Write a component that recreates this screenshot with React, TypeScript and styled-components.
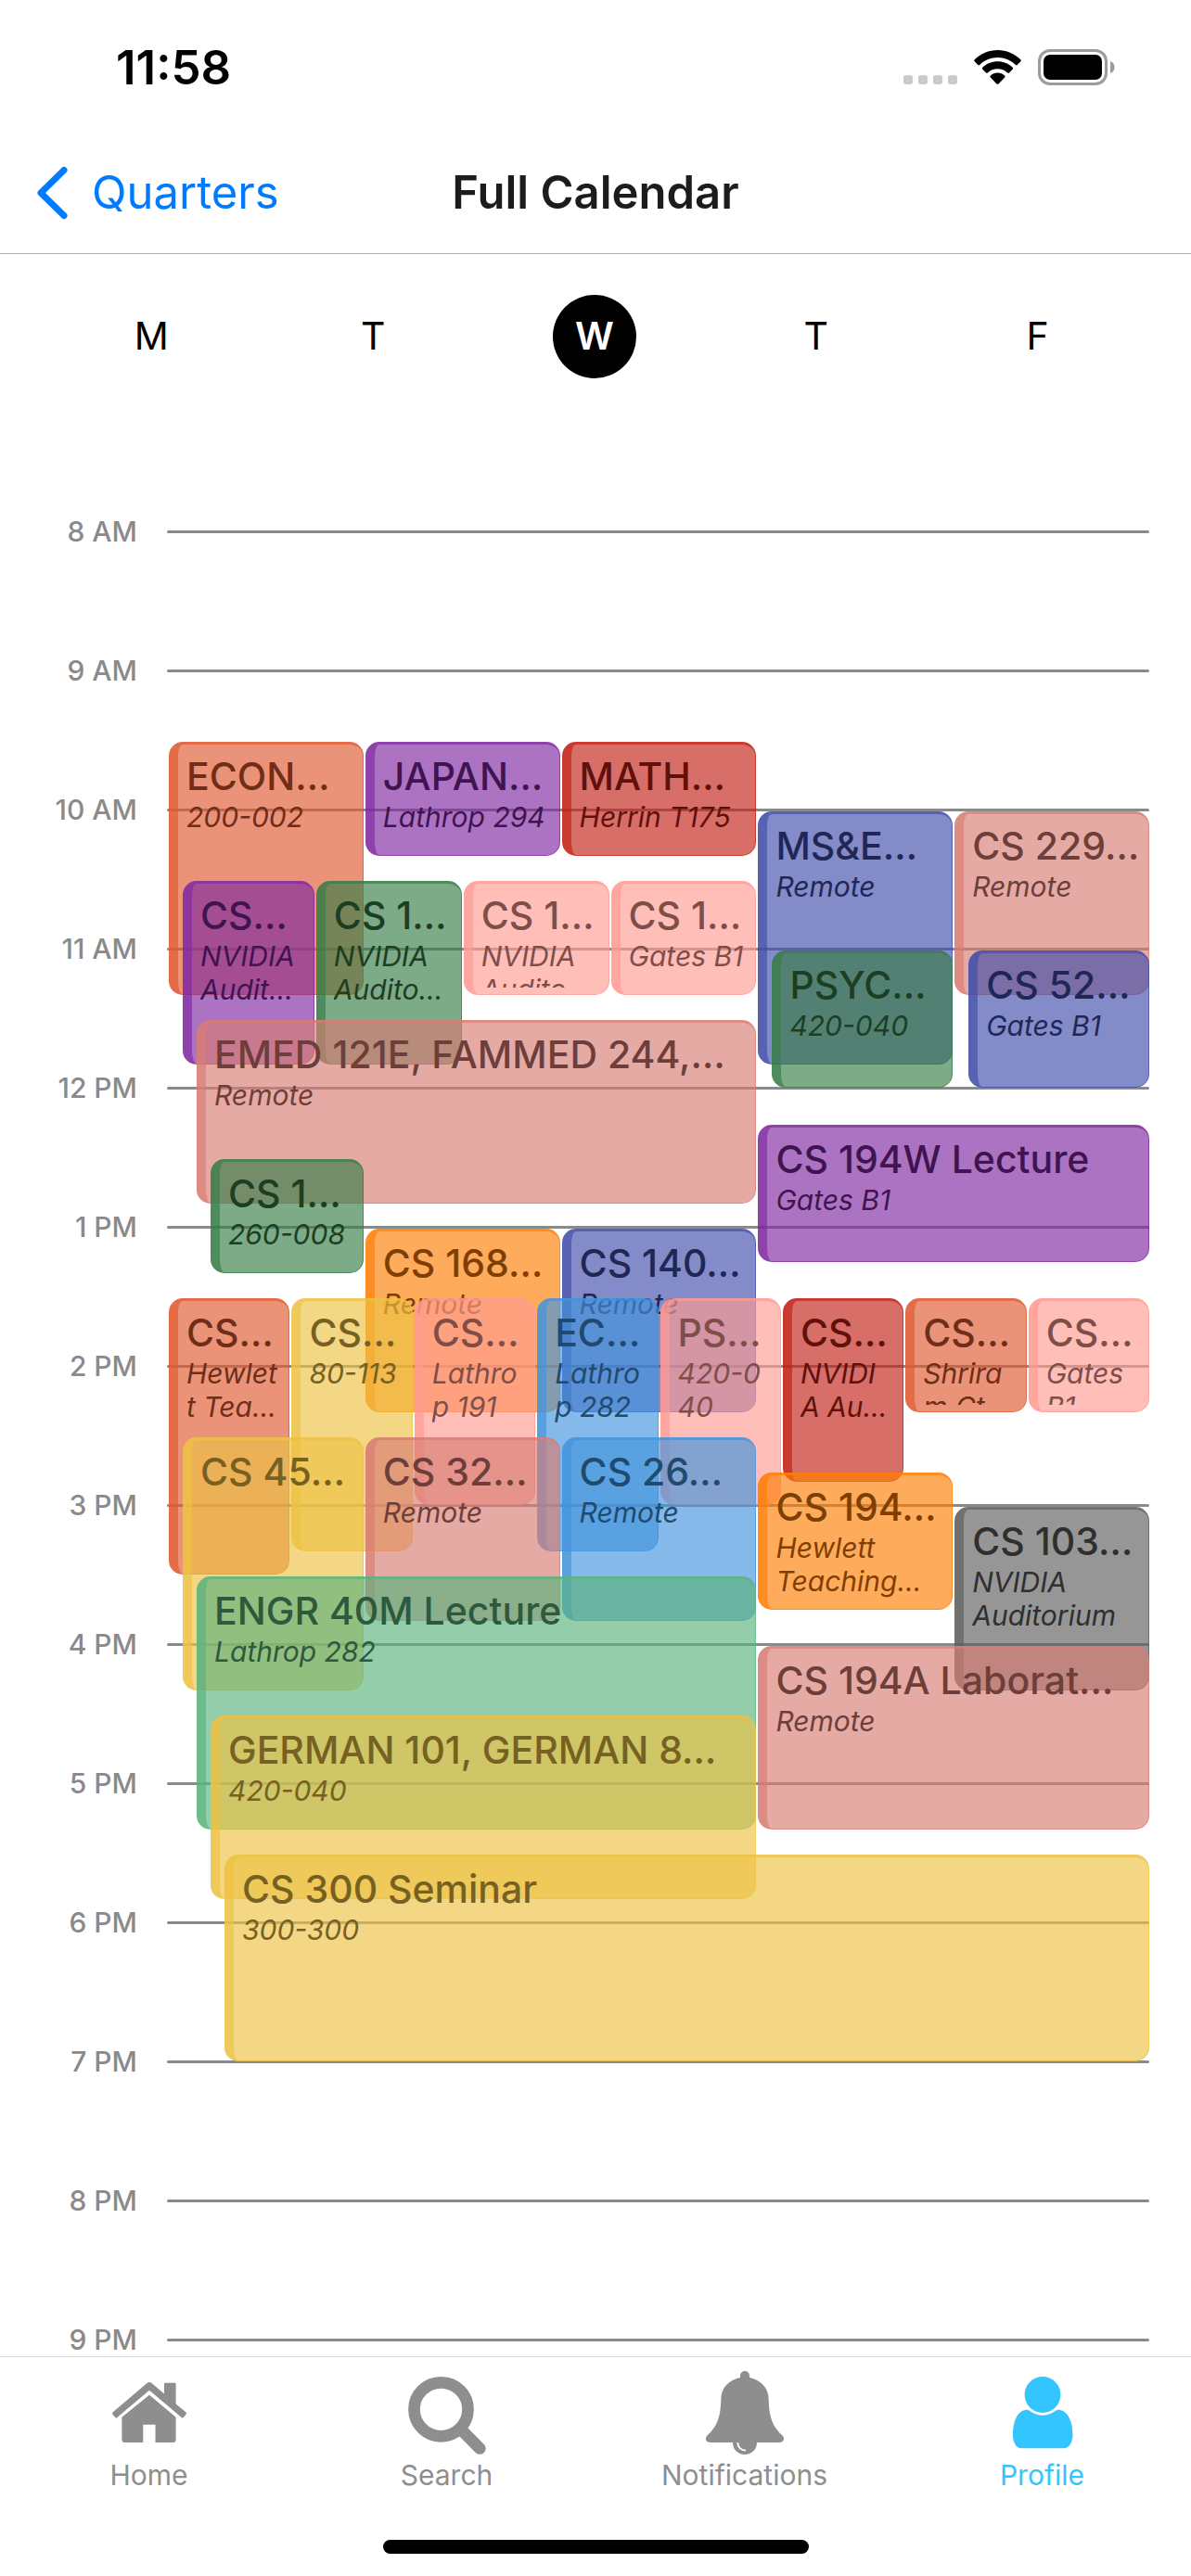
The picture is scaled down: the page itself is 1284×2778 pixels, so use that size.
import React from 'react';
import styled, { createGlobalStyle } from 'styled-components';

const GlobalStyle = createGlobalStyle`
  *, *::before, *::after { box-sizing: border-box; }
  body {
    margin: 0;
    background: #fff;
    color: #000;
    font-family: Inter, "Liberation Sans", sans-serif;
    -webkit-font-smoothing: antialiased;
  }
  button { font: inherit; color: inherit; border: 0; background: none; padding: 0; cursor: pointer; }
  h1, h2, p, ol { margin: 0; padding: 0; }
`;

const Screen = styled.div`
  display: flex;
  flex-direction: column;
  height: 100vh;
  overflow: hidden;
  background: #fff;
`;

/* ---------- status bar ---------- */

const StatusBar = styled.div`
  flex: none;
  display: flex;
  align-items: center;
  justify-content: space-between;
  height: 145px;
  padding: 0 82px 0 125px;
`;

const Clock = styled.time`
  font-size: 51px;
  line-height: 60px;
  font-weight: 600;
`;

const StatusIcons = styled.div`
  display: flex;
  align-items: center;
  gap: 18px;
`;

const Signal = styled.div`
  display: flex;
  align-self: flex-end;
  gap: 6px;
  padding-bottom: 1px;
`;

const SignalDot = styled.span`
  width: 10px;
  height: 10px;
  border-radius: 3px;
  background: #cacaca;
`;

/* ---------- navigation header ---------- */

const NavBar = styled.header`
  flex: none;
  display: grid;
  grid-template-columns: 1fr auto 1fr;
  align-items: center;
  height: 129px;
  padding: 0 40px 2px;
  border-bottom: 1px solid #b2b2b2;
`;

const BackLink = styled.a`
  display: flex;
  align-items: center;
  gap: 24px;
  color: #007aff;
  font-size: 49px;
  line-height: 60px;
  text-decoration: none;
`;

const NavTitle = styled.h1`
  font-size: 49px;
  line-height: 60px;
  font-weight: 600;
  color: #1c1c1e;
`;

/* ---------- weekday picker ---------- */

const WeekBar = styled.nav`
  flex: none;
  display: grid;
  grid-template-columns: repeat(5, 1fr);
  justify-items: center;
  padding: 44px 46px 90px 44px;
`;

const DayButton = styled.button<{ $active?: boolean }>`
  width: 90px;
  height: 90px;
  padding-bottom: 2px;
  border-radius: 50%;
  font-size: 41px;
  line-height: 88px;
  font-weight: ${(p) => (p.$active ? 600 : 400)};
  color: ${(p) => (p.$active ? '#fff' : '#000')};
  background: ${(p) => (p.$active ? '#000' : 'transparent')};
`;

/* ---------- schedule ---------- */

const Schedule = styled.main`
  flex: 1;
  min-height: 0;
  display: grid;
  grid-template-columns: minmax(0, 1fr);
  align-content: start;
  overflow-y: auto;
  scrollbar-width: none;
`;

const Hours = styled.ol`
  grid-area: 1 / 1;
  list-style: none;
`;

const HourRow = styled.li`
  display: grid;
  grid-template-columns: 148px 1fr;
  column-gap: 32px;
  align-items: center;
  height: 150px;
  padding: 1px 45px 0 0;
  font-size: 30px;
  line-height: 35px;
  font-weight: 500;
  text-align: right;
  color: #8a8a8a;
`;

const HourLine = styled.span`
  height: 3px;
  border-radius: 2px;
  background: #8a8a8a;
`;

/* 40 lanes divide evenly into 4, 5 and 8 columns; one row is five minutes. */
const Events = styled.div`
  grid-area: 1 / 1;
  display: grid;
  grid-template-columns: repeat(40, minmax(0, 1fr));
  grid-template-rows: repeat(156, minmax(0, 1fr));
  margin: 75px 45px 75px 180px;
`;

type Tint = [number, number, number];

/* Size containment keeps the text from stretching the five-minute rows. */
const EventCard = styled.article<{
  $tint: Tint;
  $lane: number;
  $span: number;
  $start: number;
  $end: number;
  $depth: number;
}>`
  grid-column: ${(p) => p.$lane + 1} / span ${(p) => p.$span};
  grid-row: ${(p) => p.$start} / ${(p) => p.$end};
  contain: size;
  display: flex;
  flex-direction: column;
  min-width: 0;
  min-height: 0;
  margin: 2px 0 0 ${(p) => 2 + p.$depth * 15}px;
  padding: 8px 0 7px 9px;
  border: solid rgba(${(p) => p.$tint.join(',')}, 0.65);
  border-width: 3px 1px 1px 10px;
  border-radius: 15px;
  background: rgba(${(p) => p.$tint.join(',')}, 0.65);
  color: rgb(${(p) => p.$tint.map((c) => Math.round(c / 2)).join(',')});
`;

const EventBody = styled.div`
  flex: 1;
  min-height: 0;
  overflow: hidden;
  white-space: nowrap;
`;

const EventTitle = styled.h2`
  font-size: 41px;
  line-height: 52px;
  font-weight: 500;
`;

const EventPlace = styled.p`
  font-size: 30px;
  line-height: 36px;
  font-style: italic;
  white-space: pre-line;
`;

/* ---------- tab bar ---------- */

const TabBar = styled.footer`
  flex: none;
  padding: 15px 0 24px;
  border-top: 1px solid #d8d8d8;
  background: #fff;
`;

const Tabs = styled.nav`
  display: grid;
  grid-template-columns: repeat(4, 1fr);
`;

const Tab = styled.a<{ $active?: boolean }>`
  display: flex;
  flex-direction: column;
  align-items: center;
  gap: 4px;
  font-size: 30px;
  line-height: 36px;
  text-decoration: none;
  color: ${(p) => (p.$active ? '#34c5ff' : '#8e8e8e')};
`;

const HomeIndicator = styled.div`
  width: 459px;
  height: 15px;
  margin: 52px auto 0;
  border-radius: 8px;
  background: #000;
`;

const TINTS: Record<string, Tint> = {
  coral: [224, 89, 47],
  purple: [127, 40, 161],
  red: [193, 33, 21],
  forest: [55, 124, 70],
  pink: [255, 155, 146],
  salmon: [217, 124, 115],
  indigo: [64, 77, 170],
  orange: [255, 126, 4],
  yellow: [236, 193, 67],
  blue: [66, 147, 221],
  gray: [93, 93, 93],
  mint: [90, 178, 124],
};

interface CourseEvent {
  title: string;
  place: string;
  tint: string;
  start: string;
  end: string;
  lane: number;
  span: number;
  depth?: number;
}

const EVENTS: CourseEvent[] = [
  { title: 'ECON…', place: '200-002', tint: 'coral', start: '9:30', end: '11:20', lane: 0, span: 8 },
  { title: 'JAPAN…', place: 'Lathrop 294', tint: 'purple', start: '9:30', end: '10:20', lane: 8, span: 8 },
  { title: 'MATH…', place: 'Herrin T175', tint: 'red', start: '9:30', end: '10:20', lane: 16, span: 8 },
  { title: 'MS&E…', place: 'Remote', tint: 'indigo', start: '10:00', end: '11:50', lane: 24, span: 8 },
  { title: 'CS 229…', place: 'Remote', tint: 'salmon', start: '10:00', end: '11:20', lane: 32, span: 8 },
  { title: 'CS…', place: 'NVIDIA\nAudit…', tint: 'purple', start: '10:30', end: '11:50', lane: 0, span: 6, depth: 1 },
  { title: 'CS 1…', place: 'NVIDIA\nAudito…', tint: 'forest', start: '10:30', end: '11:50', lane: 6, span: 6 },
  { title: 'CS 1…', place: 'NVIDIA\nAudito…', tint: 'pink', start: '10:30', end: '11:20', lane: 12, span: 6 },
  { title: 'CS 1…', place: 'Gates B1', tint: 'pink', start: '10:30', end: '11:20', lane: 18, span: 6 },
  { title: 'PSYC…', place: '420-040', tint: 'forest', start: '11:00', end: '12:00', lane: 24, span: 8, depth: 1 },
  { title: 'CS 52…', place: 'Gates B1', tint: 'indigo', start: '11:00', end: '12:00', lane: 32, span: 8, depth: 1 },
  { title: 'EMED 121E, FAMMED 244,…', place: 'Remote', tint: 'salmon', start: '11:30', end: '12:50', lane: 0, span: 24, depth: 2 },
  { title: 'CS 194W Lecture', place: 'Gates B1', tint: 'purple', start: '12:15', end: '13:15', lane: 24, span: 16 },
  { title: 'CS 1…', place: '260-008', tint: 'forest', start: '12:30', end: '13:20', lane: 0, span: 8, depth: 3 },
  { title: 'CS 168…', place: 'Remote', tint: 'orange', start: '13:00', end: '14:20', lane: 8, span: 8 },
  { title: 'CS 140…', place: 'Remote', tint: 'indigo', start: '13:00', end: '14:20', lane: 16, span: 8 },
  { title: 'CS…', place: 'Hewlet\nt Tea…', tint: 'coral', start: '13:30', end: '15:30', lane: 0, span: 5 },
  { title: 'CS…', place: '80-113', tint: 'yellow', start: '13:30', end: '15:20', lane: 5, span: 5 },
  { title: 'CS…', place: 'Lathro\np 191', tint: 'pink', start: '13:30', end: '15:00', lane: 10, span: 5 },
  { title: 'EC…', place: 'Lathro\np 282', tint: 'blue', start: '13:30', end: '15:20', lane: 15, span: 5 },
  { title: 'PS…', place: '420-0\n40', tint: 'pink', start: '13:30', end: '15:00', lane: 20, span: 5 },
  { title: 'CS…', place: 'NVIDI\nA Au…', tint: 'red', start: '13:30', end: '14:50', lane: 25, span: 5 },
  { title: 'CS…', place: 'Shrira\nm Ct…', tint: 'coral', start: '13:30', end: '14:20', lane: 30, span: 5 },
  { title: 'CS…', place: 'Gates\nB1', tint: 'pink', start: '13:30', end: '14:20', lane: 35, span: 5 },
  { title: 'CS 45…', place: '', tint: 'yellow', start: '14:30', end: '16:20', lane: 0, span: 8, depth: 1 },
  { title: 'CS 32…', place: 'Remote', tint: 'salmon', start: '14:30', end: '15:50', lane: 8, span: 8 },
  { title: 'CS 26…', place: 'Remote', tint: 'blue', start: '14:30', end: '15:50', lane: 16, span: 8 },
  { title: 'CS 194…', place: 'Hewlett\nTeaching…', tint: 'orange', start: '14:45', end: '15:45', lane: 24, span: 8 },
  { title: 'CS 103…', place: 'NVIDIA\nAuditorium', tint: 'gray', start: '15:00', end: '16:20', lane: 32, span: 8 },
  { title: 'ENGR 40M Lecture', place: 'Lathrop 282', tint: 'mint', start: '15:30', end: '17:20', lane: 0, span: 24, depth: 2 },
  { title: 'CS 194A Laborat…', place: 'Remote', tint: 'salmon', start: '16:00', end: '17:20', lane: 24, span: 16 },
  { title: 'GERMAN 101, GERMAN 8…', place: '420-040', tint: 'yellow', start: '16:30', end: '17:50', lane: 0, span: 24, depth: 3 },
  { title: 'CS 300 Seminar', place: '300-300', tint: 'yellow', start: '17:30', end: '19:00', lane: 0, span: 40, depth: 4 },
];

const HOURS = [
  '8 AM', '9 AM', '10 AM', '11 AM', '12 PM', '1 PM', '2 PM',
  '3 PM', '4 PM', '5 PM', '6 PM', '7 PM', '8 PM', '9 PM',
];

const toRow = (time: string) => {
  const [h, m] = time.split(':').map(Number);
  return (h - 8) * 12 + m / 5 + 1;
};

const WifiIcon = () => (
  <svg width="51" height="37" viewBox="0 0 51 37" fill="#000" aria-hidden="true">
    <path d="M25.5 0C35 0 43.800 3.800 50.300 10.200c.6.600.6 1.400 0 2l-3.600 3.700c-.5.500-1.300.500-1.900 0C39.700 10.900 32.900 8 25.500 8S11.300 10.900 6.200 15.900c-.6.500-1.400.5-1.900 0L.7 12.200c-.6-.6-.6-1.400 0-2C7.200 3.800 16 0 25.500 0z" />
    <path d="M25.500 12.300c6.200 0 11.900 2.400 16.200 6.400.6.600.6 1.400 0 2L38 24.400c-.5.500-1.300.5-1.900 0-2.900-2.600-6.600-4.100-10.600-4.100s-7.700 1.500-10.600 4.100c-.6.500-1.400.5-1.900 0l-3.700-3.700c-.6-.6-.6-1.400 0-2 4.300-4 10-6.400 16.200-6.400z" />
    <path d="M25.500 24.600c2.900 0 5.600 1.100 7.600 2.800.6.600.6 1.400.1 2l-6.700 7c-.6.600-1.400.6-2 0l-6.700-7c-.5-.6-.5-1.400.1-2 2-1.700 4.700-2.800 7.600-2.800z" />
  </svg>
);

const BatteryIcon = () => (
  <svg width="83" height="39" viewBox="0 0 83 39" aria-hidden="true">
    <rect x="1.500" y="1.500" width="72" height="36" rx="11.500" fill="none" stroke="#9c9c9c" strokeWidth="3" />
    <rect x="6" y="6" width="63" height="27" rx="7" fill="#000" />
    <path d="M78 13c3 1 4.500 3.500 4.500 6.500S81 25 78 26z" fill="#9c9c9c" />
  </svg>
);

const ChevronLeft = () => (
  <svg width="35" height="58" viewBox="0 0 35 58" fill="none" stroke="#007aff" strokeWidth="7" strokeLinecap="round" strokeLinejoin="round" aria-hidden="true">
    <path d="M29 4.500 4 29l25 24.500" />
  </svg>
);

const HomeIcon = () => (
  <svg width="90" height="90" viewBox="0 0 90 90" fill="currentColor" aria-hidden="true">
    <path d="M42.500 13Q45 11 47.500 13L61 24.500V14Q61 12.700 62.300 12.700H72.300Q73.600 12.700 73.600 14V35.500L84.500 44.500Q85.500 45.500 84.700 46.600L81.700 50Q80.700 51 79.700 50L45 20.700 10.300 50Q9.300 51 8.300 50L5.300 46.600Q4.500 45.500 5.500 44.500Z" />
    <path d="M45 25.700 73.600 49.700V74Q73.600 77 70.600 77H51.500V57.700H38.300V77H18.400Q15.400 77 15.400 74V49.700Z" />
  </svg>
);

const SearchIcon = () => (
  <svg width="90" height="90" viewBox="0 0 90 90" fill="none" stroke="currentColor" strokeWidth="12.700" strokeLinecap="round" aria-hidden="true">
    <circle cx="38.500" cy="41.300" r="29" />
    <path d="M60 63 80.300 83.500" />
  </svg>
);

const BellIcon = () => (
  <svg width="90" height="90" viewBox="0 0 90 90" fill="currentColor" aria-hidden="true">
    <path d="M45 0c3 0 5 2.200 5 5.500V7C62 9.500 70.500 18 70.700 30 71 50 75 60 86 70c2.500 3.500.5 7-4 7H58c0 7.500-5.500 13-13 13s-13-5.500-13-13H8c-4.500 0-6.500-3.500-4-7C15 60 19 50 19.300 30 19.500 18 28 9.500 40 7V5.500C40 2.200 42 0 45 0z" />
    <path d="M37.300 77c0 5 3.500 8.700 8.700 8.700" fill="none" stroke="#fff" strokeWidth="1.800" />
  </svg>
);

const ProfileIcon = () => (
  <svg width="90" height="90" viewBox="0 0 90 90" fill="currentColor" aria-hidden="true">
    <circle cx="45" cy="25.500" r="19.400" />
    <path d="M28 41.700C31 41.200 35 47.700 45 47.700S59 41.200 62 41.700C72.500 42 77.500 55 77.500 69c0 8-4 14.300-10 14.300h-45C16.500 83.300 13 77 13 69 13 55 17.500 42 28 41.700z" />
  </svg>
);

const TABS = [
  { label: 'Home', Icon: HomeIcon },
  { label: 'Search', Icon: SearchIcon },
  { label: 'Notifications', Icon: BellIcon },
  { label: 'Profile', Icon: ProfileIcon, active: true },
];

const DAYS = [
  { letter: 'M', name: 'Monday' },
  { letter: 'T', name: 'Tuesday' },
  { letter: 'W', name: 'Wednesday' },
  { letter: 'T', name: 'Thursday' },
  { letter: 'F', name: 'Friday' },
];

export default function App() {
  const [day, setDay] = React.useState('Wednesday');

  return (
    <Screen>
      <GlobalStyle />
      <StatusBar>
        <Clock>11:58</Clock>
        <StatusIcons>
          <Signal>
            <SignalDot />
            <SignalDot />
            <SignalDot />
            <SignalDot />
          </Signal>
          <WifiIcon />
          <BatteryIcon />
        </StatusIcons>
      </StatusBar>

      <NavBar>
        <BackLink href="#quarters">
          <ChevronLeft />
          Quarters
        </BackLink>
        <NavTitle>Full Calendar</NavTitle>
      </NavBar>

      <WeekBar aria-label="Weekday">
        {DAYS.map((d) => (
          <DayButton
            key={d.name}
            type="button"
            aria-label={d.name}
            aria-pressed={day === d.name}
            $active={day === d.name}
            onClick={() => setDay(d.name)}
          >
            {d.letter}
          </DayButton>
        ))}
      </WeekBar>

      <Schedule>
        <Hours>
          {HOURS.map((h) => (
            <HourRow key={h}>
              {h}
              <HourLine />
            </HourRow>
          ))}
        </Hours>
        <Events>
          {EVENTS.map((e, i) => (
            <EventCard
              key={i}
              $tint={TINTS[e.tint]}
              $lane={e.lane}
              $span={e.span}
              $start={toRow(e.start)}
              $end={toRow(e.end)}
              $depth={e.depth ?? 0}
            >
              <EventBody>
                <EventTitle>{e.title}</EventTitle>
                {e.place && <EventPlace>{e.place}</EventPlace>}
              </EventBody>
            </EventCard>
          ))}
        </Events>
      </Schedule>

      <TabBar>
        <Tabs aria-label="Main">
          {TABS.map(({ label, Icon, active }) => (
            <Tab key={label} href={`#${label.toLowerCase()}`} $active={active} aria-current={active ? 'page' : undefined}>
              <Icon />
              {label}
            </Tab>
          ))}
        </Tabs>
        <HomeIndicator />
      </TabBar>
    </Screen>
  );
}
